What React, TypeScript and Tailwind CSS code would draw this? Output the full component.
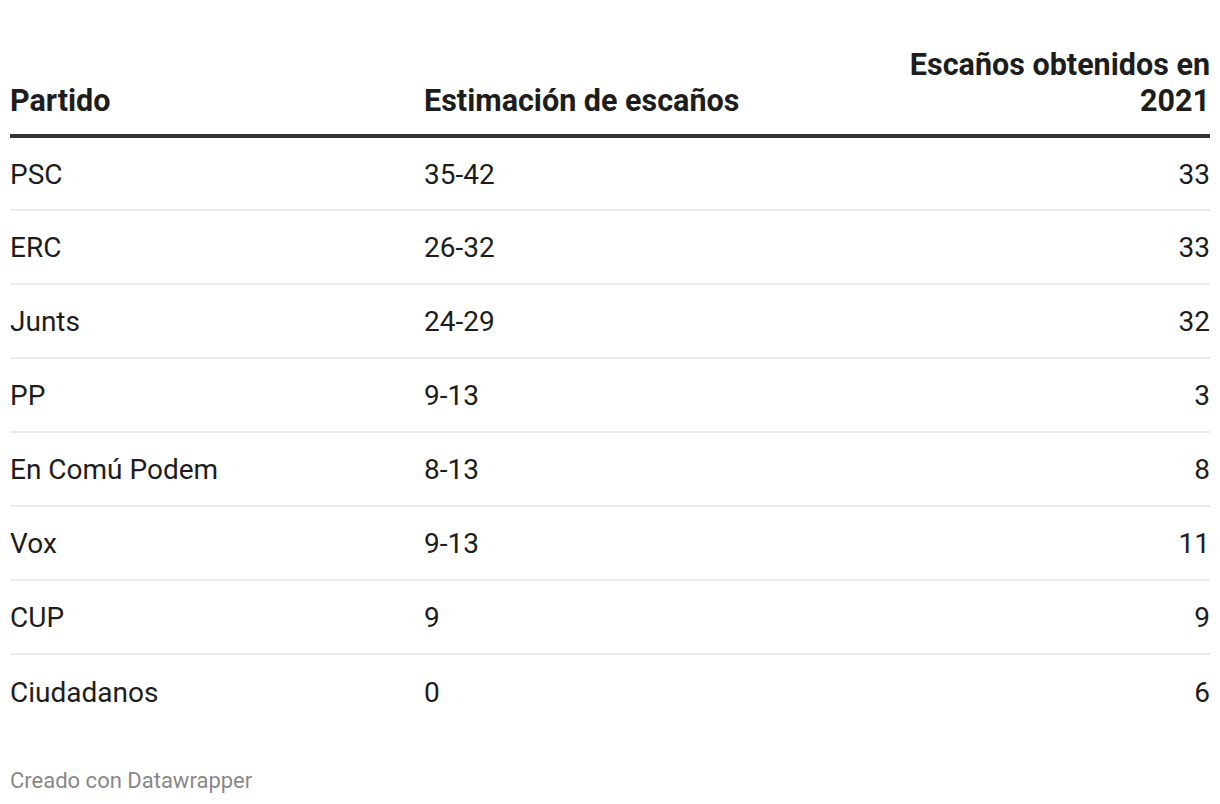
const ROWS: [string, string, string][] = [
  ["PSC", "35-42", "33"],
  ["ERC", "26-32", "33"],
  ["Junts", "24-29", "32"],
  ["PP", "9-13", "3"],
  ["En Comú Podem", "8-13", "8"],
  ["Vox", "9-13", "11"],
  ["CUP", "9", "9"],
  ["Ciudadanos", "0", "6"],
];

export default function App() {
  return (
    <div
      className="min-h-[804px] w-[1220px] bg-white px-[10px] pt-[47px] text-[#1d1d1d]"
      style={{ fontFamily: "Roboto, 'Liberation Sans', sans-serif" }}
    >
      <table className="w-full border-collapse">
        <thead>
          <tr className="border-b-4 border-[#333333]">
            <th className="w-[414px] pb-[15px] text-left align-bottom text-[30.5px] leading-[36px] font-bold">
              Partido
            </th>
            <th className="pb-[15px] text-left align-bottom text-[30.5px] leading-[36px] font-bold">
              Estimación de escaños
            </th>
            <th className="w-[340px] pb-[15px] text-right align-bottom text-[30.5px] leading-[36px] font-bold">
              Escaños obtenidos en 2021
            </th>
          </tr>
        </thead>
        <tbody>
          {ROWS.map(([party, est, seats], i) => (
            <tr
              key={party}
              className={i < ROWS.length - 1 ? "border-b-2 border-[#ececec]" : ""}
            >
              <td className="h-[74px] pt-[2px] align-middle text-[28px] leading-[30px]">{party}</td>
              <td className="h-[74px] pt-[2px] align-middle text-[28px] leading-[30px]">{est}</td>
              <td className="h-[74px] pt-[2px] text-right align-middle text-[28px] leading-[30px]">{seats}</td>
            </tr>
          ))}
        </tbody>
      </table>
      <div className="mt-[40px] text-[22px] leading-[26px] text-[#888888]">Creado con Datawrapper</div>
    </div>
  );
}
